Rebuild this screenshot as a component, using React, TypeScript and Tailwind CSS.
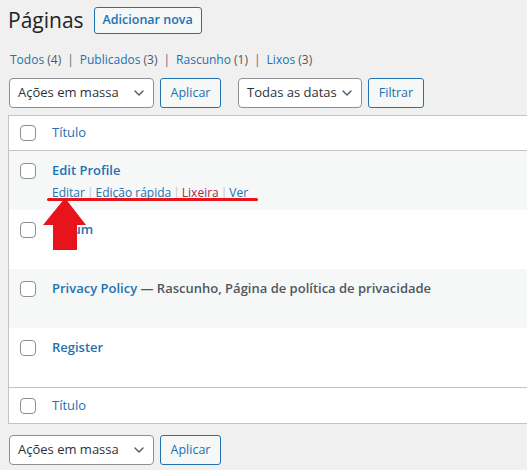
import { ChevronDown } from 'lucide-react';

const font = { fontFamily: '"Open Sans", "Noto Sans", sans-serif' };

function Checkbox() {
  return <span className="block h-4 w-4 rounded-[4px] border border-[#8c8f94] bg-white" />;
}

function BulkSelect({ label, width }: { label: string; width: string }) {
  return (
    <div
      className={`flex h-[30px] items-center justify-between whitespace-nowrap rounded-[4px] border border-[#8c8f94] bg-white pl-2 pr-[6px] text-[13px] text-[#2c3338] ${width}`}
    >
      <span>{label}</span>
      <ChevronDown size={16} strokeWidth={2} className="text-[#50575e]" />
    </div>
  );
}

function SecondaryButton({ label, width }: { label: string; width: string }) {
  return (
    <button
      className={`flex h-[30px] items-center justify-center rounded-[3px] border border-[#2271b1] bg-[#f6f7f7] text-[12.5px] text-[#2271b1] ${width}`}
    >
      {label}
    </button>
  );
}

const rows = [
  { title: 'Edit Profile', actions: true, striped: true },
  { title: 'Forum', striped: false },
  { title: 'Privacy Policy', state: 'Rascunho, Página de política de privacidade', striped: true },
  { title: 'Register', striped: false },
];

export default function App() {
  return (
    <div className="relative h-[470px] w-[527px] overflow-hidden bg-[#f0f0f1] pl-2" style={font}>
      <div className="flex items-center gap-[10px] pt-[5px]">
        <h1 className="text-[21px] leading-[30px] text-[#1d2327]">Páginas</h1>
        <button className="h-[27px] rounded-[3px] border border-[#2271b1] bg-[#f6f7f7] px-[8px] text-[12.5px] font-semibold text-[#2271b1]">
          Adicionar nova
        </button>
      </div>

      <div className="mt-[15px] flex items-center pl-[2px] text-[12px] leading-[20px] text-[#50575e]">
        <span className="text-[#2271b1]">Todos</span>&nbsp;(4)<span className="mx-[6px] text-[#646970]">|</span>
        <span className="text-[#2271b1]">Publicados</span>&nbsp;(3)<span className="mx-[6px] text-[#646970]">|</span>
        <span className="text-[#2271b1]">Rascunho</span>&nbsp;(1)<span className="mx-[6px] text-[#646970]">|</span>
        <span className="text-[#2271b1]">Lixos</span>&nbsp;(3)
      </div>

      <div className="mt-[8px] flex items-center pl-[1px]">
        <BulkSelect label="Ações em massa" width="w-[145px]" />
        <div className="ml-[6px]">
          <SecondaryButton label="Aplicar" width="w-[61px]" />
        </div>
        <div className="ml-[17px]">
          <BulkSelect label="Todas as datas" width="w-[124px]" />
        </div>
        <div className="ml-[6px]">
          <SecondaryButton label="Filtrar" width="w-[56px]" />
        </div>
      </div>

      <div className="-mr-4 mt-[7px] border border-[#c3c4c7] bg-white">
        <div className="flex h-[35px] items-center border-b border-[#c3c4c7]">
          <div className="w-[43px] pl-[11px]">
            <Checkbox />
          </div>
          <span className="text-[13px] text-[#2271b1]">Título</span>
        </div>

        {rows.map((r) => (
          <div key={r.title} className={`flex h-[59px] ${r.striped ? 'bg-[#f6f7f7]' : 'bg-white'}`}>
            <div className="w-[43px] pl-[11px] pt-[12px]">
              <Checkbox />
            </div>
            <div className="pt-[9px]">
              <div className="text-[13px] font-semibold leading-[21px]">
                <span className="text-[#2271b1]">{r.title}</span>
                {r.state && <span className="text-[#50575e]"> — {r.state}</span>}
              </div>
              {r.actions && (
                <div className="mt-[2px] flex items-center text-[12px] leading-[19px] text-[#c3c4c7]">
                  <span className="text-[#2271b1]">Editar</span>
                  <span className="mx-[2px]">|</span>
                  <span className="text-[#2271b1]">Edição rápida</span>
                  <span className="mx-[2px]">|</span>
                  <span className="text-[#a12b4f]">Lixeira</span>
                  <span className="mx-[2px]">|</span>
                  <span className="text-[#2271b1]">Ver</span>
                </div>
              )}
            </div>
          </div>
        ))}

        <div className="flex h-[36px] items-center border-t border-[#c3c4c7]">
          <div className="w-[43px] pl-[11px]">
            <Checkbox />
          </div>
          <span className="text-[13px] text-[#2271b1]">Título</span>
        </div>
      </div>

      <div className="mt-[11px] flex items-center pl-[1px]">
        <BulkSelect label="Ações em massa" width="w-[145px]" />
        <div className="ml-[6px]">
          <SecondaryButton label="Aplicar" width="w-[61px]" />
        </div>
      </div>

      {/* red annotation */}
      <div className="absolute left-[47px] top-[198px] h-[3px] w-[211px] rounded-full bg-[#e8141c]" />
      <svg className="absolute left-[42px] top-[197px]" width="46" height="56" viewBox="0 0 46 56">
        <polygon points="23,1 44,28 35,28 35,53 11,53 11,28 1,28" fill="#e8141c" />
      </svg>
    </div>
  );
}
